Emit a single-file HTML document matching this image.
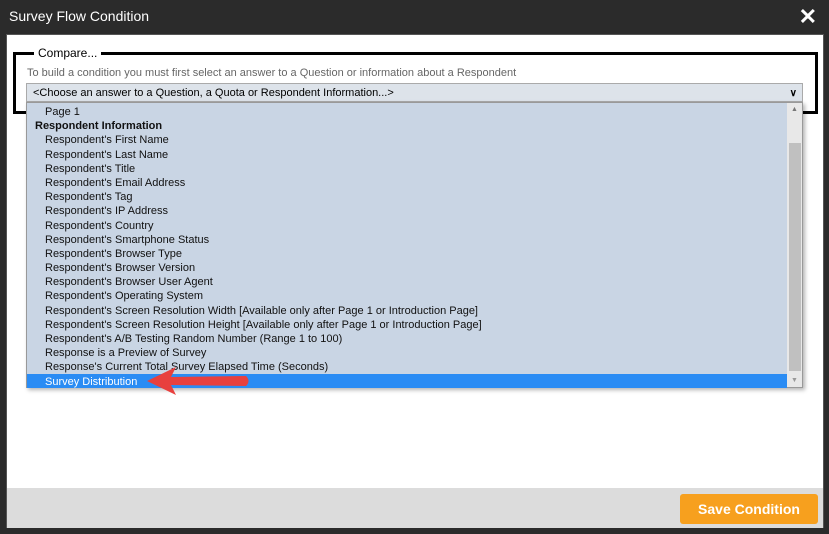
<!DOCTYPE html>
<html><head><style>
body{margin:0;width:829px;height:534px;background:#2b2b2b;font-family:"Liberation Sans",Arial,sans-serif;position:relative;overflow:hidden}
.title{position:absolute;left:9px;top:8px;color:#fff;font-size:14px}
.x{position:absolute;right:12px;top:4px;color:#fff;font-size:22px;font-weight:bold}
.body{position:absolute;left:6px;top:34px;width:818px;height:494px;background:#fff;border:1px solid #555;box-sizing:border-box}
.foot{position:absolute;left:7px;top:488px;width:816px;height:40px;background:#dcdcdc}
.btn{position:absolute;left:680px;top:494px;width:138px;height:30px;background:#f7a01e;border-radius:3px;color:#fff;font-weight:bold;font-size:14px;text-align:center;line-height:30px}
.fs{position:absolute;left:13px;top:52px;width:805px;height:62px;border:3px solid #000;box-sizing:border-box}
.lg{position:absolute;left:34px;top:46px;background:#fff;padding:0 4px;font-size:12px;color:#000}
.hint{position:absolute;left:27px;top:67px;font-size:11px;color:#666}
.sel{position:absolute;left:26px;top:83px;width:777px;height:19px;background:#dde3ea;border:1px solid #aaa;box-sizing:border-box;font-size:11px;line-height:19px;padding-left:6px;color:#000}
.sel span{position:absolute;right:5px;top:0;font-weight:bold;font-size:10px}
.list{position:absolute;left:26px;top:102px;width:777px;height:286px;background:#c9d5e4;border:1px solid #999;box-sizing:border-box;box-shadow:2px 2px 4px rgba(0,0,0,.3);font-size:11px;padding-top:1px}
.r{height:14.2px;line-height:16px;padding-left:18px;color:#111}
.h{padding-left:8px;font-weight:bold}
.s{background:#2a8cf4;color:#fff;margin-right:15px}
.sb{position:absolute;right:0;top:0;width:15px;height:284px;background:#e8e8e8}
.th{position:absolute;right:1px;top:40px;width:12px;height:228px;background:#c0c0c0}
</style></head><body>
<div class="title">Survey Flow Condition</div>
<div class="x">✕</div>
<div class="body"></div>
<div class="foot"></div>
<div class="btn">Save Condition</div>
<div class="fs"></div>
<div class="lg">Compare...</div>
<div class="hint">To build a condition you must first select an answer to a Question or information about a Respondent</div>
<div class="sel">&lt;Choose an answer to a Question, a Quota or Respondent Information...&gt;<span>∨</span></div>
<div class="list">
<div class="sb"><div class="th"></div><div style="position:absolute;top:3px;left:4px;font-size:7px;color:#777">▲</div><div style="position:absolute;bottom:3px;left:4px;font-size:7px;color:#999">▼</div></div>
<div class="r">Page 1</div>
<div class="r h">Respondent Information</div>
<div class="r">Respondent's First Name</div>
<div class="r">Respondent's Last Name</div>
<div class="r">Respondent's Title</div>
<div class="r">Respondent's Email Address</div>
<div class="r">Respondent's Tag</div>
<div class="r">Respondent's IP Address</div>
<div class="r">Respondent's Country</div>
<div class="r">Respondent's Smartphone Status</div>
<div class="r">Respondent's Browser Type</div>
<div class="r">Respondent's Browser Version</div>
<div class="r">Respondent's Browser User Agent</div>
<div class="r">Respondent's Operating System</div>
<div class="r">Respondent's Screen Resolution Width [Available only after Page 1 or Introduction Page]</div>
<div class="r">Respondent's Screen Resolution Height [Available only after Page 1 or Introduction Page]</div>
<div class="r">Respondent's A/B Testing Random Number (Range 1 to 100)</div>
<div class="r">Response is a Preview of Survey</div>
<div class="r">Response's Current Total Survey Elapsed Time (Seconds)</div>
<div class="r s">Survey Distribution</div>
</div>
<svg style="position:absolute;left:140px;top:364px" width="115" height="32"><path d="M7 17 L36 3 L31 13 L106 12 Q111 17 106 22 L31 21 L36 31 Z" fill="#e8403e"/></svg>
</body></html>
